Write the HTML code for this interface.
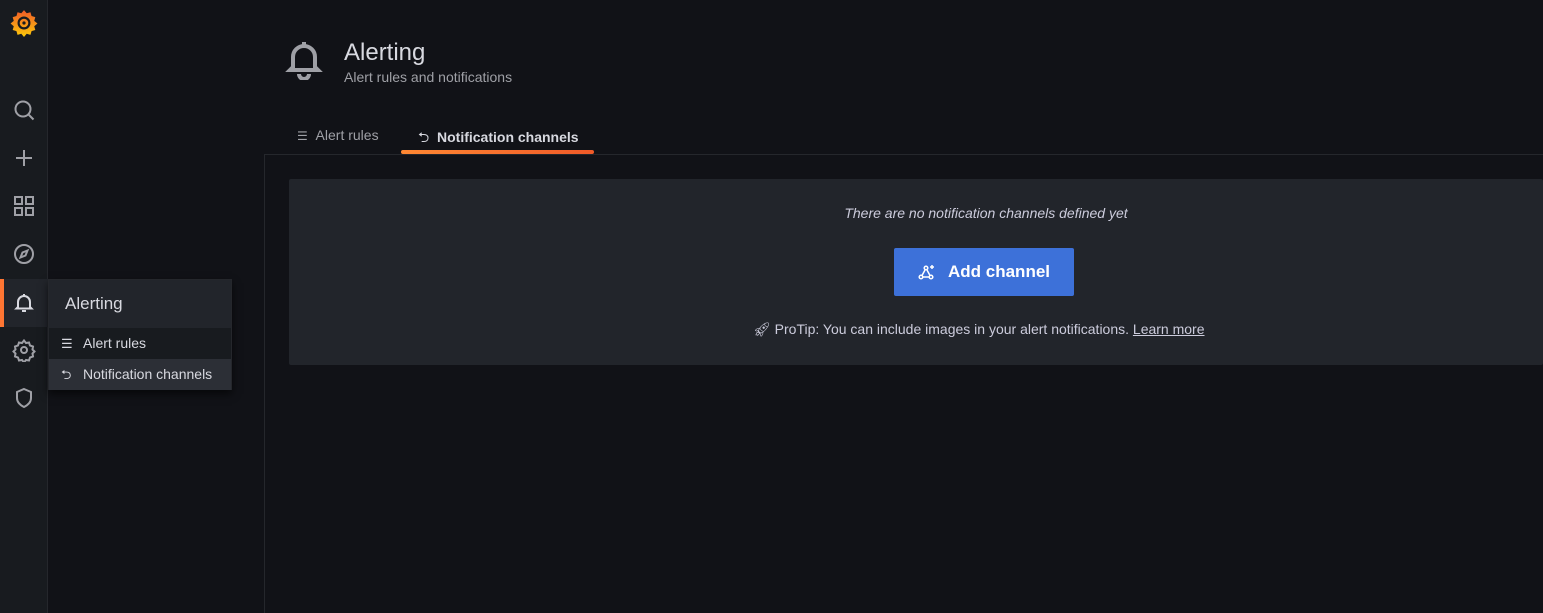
<!DOCTYPE html>
<html><head><style>
*{box-sizing:border-box;margin:0;padding:0}
html,body{width:1543px;height:613px;overflow:hidden}
body{background:#111217;font-family:"Liberation Sans",sans-serif;color:#ccccdc;position:relative}
.side{position:absolute;left:0;top:0;width:48px;height:613px;background:#181b1f;border-right:1px solid #25272c}
.ic{position:absolute;left:12px;width:24px;height:24px}
.active{position:absolute;left:0;top:279px;width:48px;height:48px;background:#22252b}
.active:before{content:"";position:absolute;left:0;top:0;width:4px;height:48px;background:#ff7633}
.menu{position:absolute;left:48px;top:279px;width:184px;height:111px;background:#181b1f;box-shadow:0 4px 8px rgba(0,0,0,.6);border:1px solid #25272c}
.mh{height:48px;background:#22252b;font-size:17px;line-height:48px;padding-left:16px;color:#d8d9e0}
.mi{height:31px;line-height:31px;font-size:14px;padding-left:34px;position:relative;color:#d8d9e0}
.mi.sel{background:#2c2f36}
.content{position:absolute;left:264px;top:154px;width:1279px;height:459px;border-left:1px solid #25272c;border-top:1px solid #25272c}
.card{position:absolute;left:289px;top:179px;width:1254px;height:186px;background:#22252b;border-radius:2px}
</style></head><body>
<div class="side">
<svg style="position:absolute;left:10px;top:9px" width="28" height="28" viewBox="0 0 26 26"><defs><linearGradient id="g" x1="0" y1="1" x2="0" y2="0"><stop offset="0" stop-color="#fbca0a"/><stop offset="1" stop-color="#f05a28"/></linearGradient></defs><path d="M13 1l2.5 3 3.5-1 1 3.5 3.5 1-1 3.5 3 2.5-3 2.5 1 3.5-3.5 1-1 3.5-3.5-1-2.5 3-2.5-3-3.5 1-1-3.5-3.5-1 1-3.5-3-2.5 3-2.5-1-3.5 3.5-1 1-3.5 3.5 1z" fill="url(#g)"/><circle cx="13" cy="13" r="5" fill="none" stroke="#181b1f" stroke-width="2"/><circle cx="13" cy="13" r="1.5" fill="#181b1f"/></svg>
<svg class="ic" style="top:98px" viewBox="0 0 24 24" fill="none" stroke="#9fa0a6" stroke-width="2"><circle cx="11" cy="11" r="7.5"/><path d="M16.5 16.5l5 5"/></svg>
<svg class="ic" style="top:146px" viewBox="0 0 24 24" fill="none" stroke="#9fa0a6" stroke-width="2"><path d="M12 4v16M4 12h16"/></svg>
<svg class="ic" style="top:194px" viewBox="0 0 24 24" fill="none" stroke="#9fa0a6" stroke-width="2"><rect x="3" y="3" width="7" height="7"/><rect x="14" y="3" width="7" height="7"/><rect x="3" y="14" width="7" height="7"/><rect x="14" y="14" width="7" height="7"/></svg>
<svg class="ic" style="top:242px" viewBox="0 0 24 24" fill="none" stroke="#9fa0a6" stroke-width="2"><circle cx="12" cy="12" r="9"/><path d="M15.5 8.5l-2 5-5 2 2-5z"/></svg>
<div class="active"></div>
<svg class="ic" style="top:291px" viewBox="0 0 24 24" fill="none" stroke="#d8d9e0" stroke-width="2"><path d="M6 16v-5a6 6 0 0112 0v5l1.5 1.5h-15z M10 20h4M12 3v2"/></svg>
<svg class="ic" style="top:338px" viewBox="0 0 24 24" fill="none" stroke="#9fa0a6" stroke-width="2"><circle cx="12" cy="12" r="3"/><path d="M12 2.5l2 2.5 3-.5 1 3 3 1-.5 3 2 2-2 2 .5 3-3 1-1 3-3-.5-2 2.5-2-2.5-3 .5-1-3-3-1 .5-3-2-2 2-2-.5-3 3-1 1-3 3 .5z"/></svg>
<svg class="ic" style="top:386px" viewBox="0 0 24 24" fill="none" stroke="#9fa0a6" stroke-width="2"><path d="M12 3l7 3v6c0 4-3 7-7 9-4-2-7-5-7-9V6z"/></svg>
</div>
<div class="menu">
<div class="mh">Alerting</div>
<div class="mi"><span style="position:absolute;left:12px;top:0;font-size:13px">☰</span>Alert rules</div>
<div class="mi sel"><span style="position:absolute;left:12px;top:0;font-size:13px">⮌</span>Notification channels</div>
</div>
<svg style="position:absolute;left:285px;top:40px" width="38" height="40" viewBox="0 0 38 40" fill="none" stroke="#9fa0a6" stroke-width="4"><path d="M8 27V17a11 11 0 0122 0v10l3 3H5z"/><path d="M14 34a5 5 0 0010 0"/><path d="M19 2v4"/></svg>
<div style="position:absolute;left:344px;top:39px;font-size:24px;color:#d8d9e0">Alerting</div>
<div style="position:absolute;left:344px;top:69px;font-size:14px;color:#9fa0a6">Alert rules and notifications</div>
<div style="position:absolute;left:297px;top:127px;font-size:14px;color:#9fa0a6"><span style="font-size:12px">☰</span>&nbsp;&nbsp;Alert rules</div>
<div style="position:absolute;left:418px;top:127px;font-size:14px;color:#d8d9e0;font-weight:bold"><span style="font-weight:normal">⮌</span>&nbsp;&nbsp;Notification channels</div>
<div style="position:absolute;left:401px;top:150px;width:193px;height:4px;border-radius:2px;background:linear-gradient(90deg,#ff8833,#f05a28)"></div>
<div class="content"></div>
<div class="card">
<div style="position:absolute;left:0;width:1394px;top:26px;text-align:center;font-size:14px;font-style:italic;color:#ccccdc">There are no notification channels defined yet</div>
<div style="position:absolute;left:605px;top:69px;width:180px;height:48px;background:#3d71d9;border-radius:2px;color:#fff;font-size:17px;font-weight:bold;line-height:48px;padding-left:54px">Add channel
<svg style="position:absolute;left:24px;top:15px" width="18" height="18" viewBox="0 0 18 18" fill="none" stroke="#fff" stroke-width="1.5"><circle cx="8" cy="5" r="1.8"/><circle cx="3" cy="14" r="1.8"/><circle cx="13" cy="14" r="1.8"/><path d="M7 7l-3 5.5M9 7l3 5.5M5 14h6M14 2v4M12 4h4"/></svg></div>
<div style="position:absolute;left:464px;top:142px;font-size:14px;color:#ccccdc">🚀︎ ProTip: You can include images in your alert notifications. <u>Learn more</u></div>
</div>
</body></html>
